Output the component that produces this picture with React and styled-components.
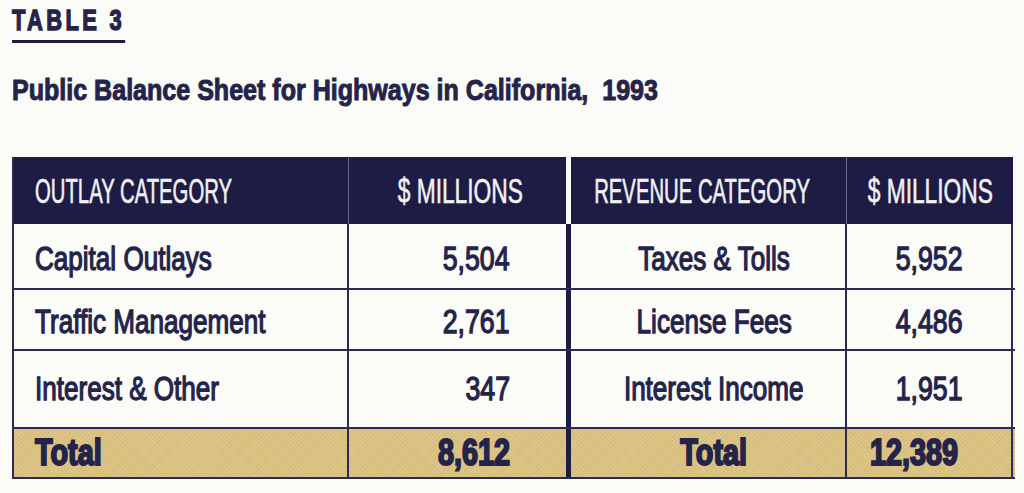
import React from "react";
import styled, { createGlobalStyle } from "styled-components";

const GlobalStyle = createGlobalStyle`
  html, body {
    margin: 0;
    padding: 0;
    background: #fbfbf8;
  }
  body {
    font-family: "Liberation Sans", "DejaVu Sans", sans-serif;
    color: #24244a;
  }
`;

const NAVY = "#1d1c45";
const LINE = "#2b2a55";
const INK = "#24244a";

const Page = styled.div`
  width: 1024px;
  height: 493px;
  padding: 5px 0 0 12px;
  box-sizing: border-box;
  overflow: hidden;
`;

// the source face is a condensed sans; squeeze Liberation Sans to match
const Squeeze = styled.span`
  display: inline-block;
  white-space: pre;
  transform: scaleX(${(p) => p.$x});
  transform-origin: ${(p) => p.$origin || "center"};
`;

const Eyebrow = styled(Squeeze)`
  font-size: 30px;
  line-height: 30px;
  font-weight: 700;
  letter-spacing: 4.6px;
  padding-bottom: 5px;
  border-bottom: 3px solid ${NAVY};
  -webkit-text-stroke: 1.4px ${INK};
`;

const Title = styled.h1`
  margin: 32px 0 0;
  font-size: 30px;
  line-height: 30px;
  font-weight: 700;
  -webkit-text-stroke: 1px ${INK};
`;

const Table = styled.div`
  margin-top: 52px;
  width: 1001px;
  border-left: 2px solid ${LINE};
`;

const Row = styled.div`
  display: grid;
  grid-template-columns: 335px 217px 5px 276px 166px;
  height: ${(p) => p.$h}px;
  background-color: ${(p) => (p.$total ? "#dbc280" : "transparent")};
  background-image: ${(p) =>
    p.$total
      ? "repeating-linear-gradient(45deg, rgba(255,255,255,0.10) 0 1px, transparent 1px 3px), repeating-linear-gradient(-45deg, rgba(120,90,30,0.07) 0 1px, transparent 1px 3px)"
      : "none"};
  border-bottom: ${(p) => (p.$head ? "none" : `2px solid ${LINE}`)};
  box-sizing: border-box;
`;

const HeadCell = styled.div`
  display: flex;
  align-items: center;
  justify-content: ${(p) => p.$align || "center"};
  padding: ${(p) => p.$pad || "0"};
  background: ${NAVY};
  color: #f1f1f4;
  border-right: ${(p) => (p.$rule ? "1px solid #6b6a8c" : "none")};
  font-size: 35px;
  -webkit-text-stroke: 0.6px #f1f1f4;
  white-space: nowrap;
`;

const Gap = styled.div`
  background: ${(p) => (p.$dark ? NAVY : "#fbfbf8")};
`;

const Cell = styled.div`
  display: flex;
  align-items: center;
  justify-content: ${(p) => p.$align || "flex-start"};
  padding: ${(p) => p.$pad || "0"};
  padding-top: ${(p) => p.$dy || 0}px;
  border-right: ${(p) => (p.$noRule ? "none" : `2px solid ${LINE}`)};
  font-size: ${(p) => (p.$bold ? 36 : 33)}px;
  font-weight: ${(p) => (p.$bold ? 700 : 400)};
  -webkit-text-stroke: ${(p) => (p.$bold ? "2px" : "1.3px")} ${INK};
  white-space: nowrap;
`;

const rows = [
  { h: 66, dy: 5, a: "Capital Outlays", b: "5,504", c: "Taxes & Tolls", d: "5,952" },
  { h: 61, dy: 5, a: "Traffic Management", b: "2,761", c: "License Fees", d: "4,486" },
  { h: 78, dy: 0, a: "Interest & Other", b: "347", c: "Interest Income", d: "1,951" },
];

export default function App() {
  return (
    <Page>
      <GlobalStyle />
      <div>
        <Eyebrow $x={0.73} $origin="left">TABLE 3</Eyebrow>
      </div>
      <Title>
        <Squeeze $x={0.835} $origin="left">Public Balance Sheet for Highways in California,  1993</Squeeze>
      </Title>

      <Table>
        <Row $h={67} $head>
          <HeadCell $align="flex-start" $pad="0 0 0 21px" $rule>
            <Squeeze $x={0.58} $origin="left">OUTLAY CATEGORY</Squeeze>
          </HeadCell>
          <HeadCell $pad="0 0 0 6px">
            <Squeeze $x={0.65}>$ MILLIONS</Squeeze>
          </HeadCell>
          <Gap />
          <HeadCell $pad="0 12px 0 0" $rule>
            <Squeeze $x={0.58}>REVENUE CATEGORY</Squeeze>
          </HeadCell>
          <HeadCell>
            <Squeeze $x={0.65}>$ MILLIONS</Squeeze>
          </HeadCell>
        </Row>

        {rows.map((r) => (
          <Row key={r.a} $h={r.h}>
            <Cell $pad="0 0 0 21px" $dy={r.dy}>
              <Squeeze $x={0.79} $origin="left">{r.a}</Squeeze>
            </Cell>
            <Cell $align="flex-end" $pad="0 56px 0 0" $dy={r.dy} $noRule>
              <Squeeze $x={0.81} $origin="right">{r.b}</Squeeze>
            </Cell>
            <Gap $dark />
            <Cell $align="center" $pad="0 0 0 12px" $dy={r.dy}>
              <Squeeze $x={0.79}>{r.c}</Squeeze>
            </Cell>
            <Cell $align="flex-end" $pad="0 48px 0 0" $dy={r.dy}>
              <Squeeze $x={0.81} $origin="right">{r.d}</Squeeze>
            </Cell>
          </Row>
        ))}

        <Row $h={50} $total>
          <Cell $pad="0 0 0 21px" $bold>
            <Squeeze $x={0.8} $origin="left">Total</Squeeze>
          </Cell>
          <Cell $align="flex-end" $pad="0 56px 0 0" $bold $noRule>
            <Squeeze $x={0.8} $origin="right">8,612</Squeeze>
          </Cell>
          <Gap $dark />
          <Cell $align="center" $pad="0 0 0 12px" $bold>
            <Squeeze $x={0.8}>Total</Squeeze>
          </Cell>
          <Cell $align="flex-end" $pad="0 53px 0 0" $bold>
            <Squeeze $x={0.8} $origin="right">12,389</Squeeze>
          </Cell>
        </Row>
      </Table>
    </Page>
  );
}
